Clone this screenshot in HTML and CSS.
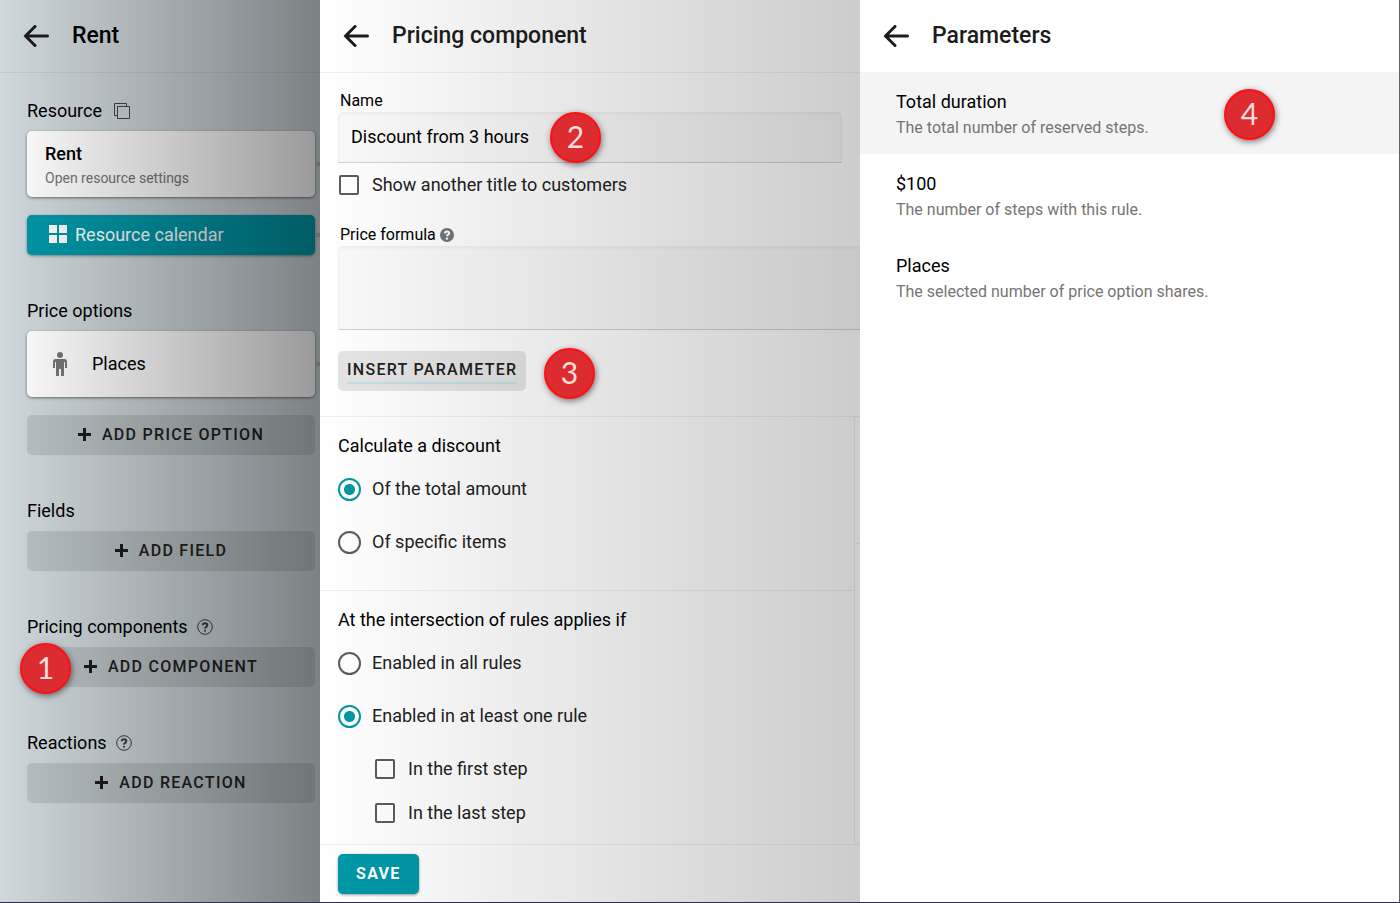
FILE: index.html
```html
<!DOCTYPE html>
<html lang="en">
<head>
  <meta charset="UTF-8" />
  <meta name="viewport" content="width=device-width, initial-scale=1.0"/>
  <title>Pricing component</title>
  <link rel="stylesheet" href="styles.css">
</head>

<body>

  <!-- Resource panel -->
  <section class="panel resource-panel shaded">
    <header>
      <button class="back" aria-label="Back">
        <svg width="26" height="22" viewBox="0 0 26 22"><path d="M12 1.500L2.500 11L12 20.500M2.500 11H24.500" /></svg>
      </button>
      <h1>Rent</h1>
    </header>

    <div class="sections">
      <div class="section">
        <h2>Resource
          <svg class="copy" width="18" height="18" viewBox="0 0 18 18"><path d="M4.500 13.500H1.500V1.500H13.500V4.500M4.500 4.500H16.500V16.500H4.500Z" /></svg>
        </h2>
        <a class="card" href="#resource">
          <span class="card-title">Rent</span>
          <span class="card-note">Open resource settings</span>
        </a>
        <button class="calendar-btn">
          <svg width="18" height="18" viewBox="0 0 18 18"><path d="M0 0H8V8H0ZM10 0H18V8H10ZM0 10H8V18H0ZM10 10H18V18H10Z" /></svg>
          Resource calendar
        </button>
      </div>

      <div class="section">
        <h2>Price options</h2>
        <a class="card place-card" href="#places">
          <svg width="14" height="24" viewBox="0 0 14 24"><circle cx="7" cy="3" r="3" /><path d="M2.500 7H11.500Q14 7 14 9.500V16H12V10H11V24H8V17H6V24H3V10H2V16H0V9.500Q0 7 2.500 7Z" /></svg>
          <span>Places</span>
        </a>
        <button class="add-btn"><svg class="plus" width="13" height="13" viewBox="0 0 13 13"><path d="M6.500 0V13M0 6.500H13" /></svg>ADD PRICE OPTION</button>
      </div>

      <div class="section">
        <h2>Fields</h2>
        <button class="add-btn"><svg class="plus" width="13" height="13" viewBox="0 0 13 13"><path d="M6.500 0V13M0 6.500H13" /></svg>ADD FIELD</button>
      </div>

      <div class="section">
        <h2>Pricing components
          <svg class="help" width="16" height="16" viewBox="0 0 16 16"><circle cx="8" cy="8" r="7.300" /><path class="hook" d="M5.700 6.300Q5.800 4.300 8 4.300T10.300 6.200Q10.300 7.200 9.200 7.800T8 9.600" /><circle class="dot" cx="8" cy="11.700" r="1" /></svg>
        </h2>
        <button class="add-btn"><svg class="plus" width="13" height="13" viewBox="0 0 13 13"><path d="M6.500 0V13M0 6.500H13" /></svg>ADD COMPONENT</button>
        <span class="badge badge-1">1</span>
      </div>

      <div class="section">
        <h2>Reactions
          <svg class="help" width="16" height="16" viewBox="0 0 16 16"><circle cx="8" cy="8" r="7.300" /><path class="hook" d="M5.700 6.300Q5.800 4.300 8 4.300T10.300 6.200Q10.300 7.200 9.200 7.800T8 9.600" /><circle class="dot" cx="8" cy="11.700" r="1" /></svg>
        </h2>
        <button class="add-btn"><svg class="plus" width="13" height="13" viewBox="0 0 13 13"><path d="M6.500 0V13M0 6.500H13" /></svg>ADD REACTION</button>
      </div>
    </div>
  </section>

  <!-- Pricing component form -->
  <form class="panel form-panel shaded">
    <header>
      <button type="button" class="back" aria-label="Back">
        <svg width="26" height="22" viewBox="0 0 26 22"><path d="M12 1.500L2.500 11L12 20.500M2.500 11H24.500" /></svg>
      </button>
      <h1>Pricing component</h1>
    </header>

    <div class="fields">
      <label class="field-label" for="name">Name</label>
      <div class="name-row">
        <input type="text" id="name" value="Discount from 3 hours">
        <span class="badge badge-2">2</span>
      </div>
      <label class="choice"><input type="checkbox">Show another title to customers</label>
      <label class="field-label formula-label" for="formula">Price formula
        <svg width="14" height="14" viewBox="0 0 14 14"><circle cx="7" cy="7" r="7" /><path class="hook" d="M4.800 5.400Q5 3.500 7 3.500T9.200 5.200Q9.200 6.200 8.100 6.700T7 8.300" /><circle class="dot" cx="7" cy="10.600" r="1.200" /></svg>
      </label>
      <textarea id="formula"></textarea>
      <div class="insert-row">
        <button type="button" class="insert-btn"><span>INSERT PARAMETER</span></button>
        <span class="badge badge-3">3</span>
      </div>
    </div>

    <div class="rules">
      <div class="groups">
        <fieldset>
          <legend>Calculate a discount</legend>
          <label class="choice"><input type="radio" name="base" checked>Of the total amount</label>
          <label class="choice"><input type="radio" name="base">Of specific items</label>
        </fieldset>
        <fieldset>
          <legend>At the intersection of rules applies if</legend>
          <label class="choice"><input type="radio" name="rule">Enabled in all rules</label>
          <label class="choice"><input type="radio" name="rule" checked>Enabled in at least one rule</label>
          <div class="steps">
            <label class="choice"><input type="checkbox">In the first step</label>
            <label class="choice"><input type="checkbox">In the last step</label>
          </div>
        </fieldset>
      </div>
      <div class="side"><div class="side-block"></div></div>
    </div>

    <footer>
      <button type="button" class="save-btn">SAVE</button>
    </footer>
  </form>

  <!-- Parameters list -->
  <section class="panel params-panel">
    <header>
      <button class="back" aria-label="Back">
        <svg width="26" height="22" viewBox="0 0 26 22"><path d="M12 1.500L2.500 11L12 20.500M2.500 11H24.500" /></svg>
      </button>
      <h1>Parameters</h1>
    </header>
    <ul>
      <li class="active">
        <h3>Total duration</h3>
        <p>The total number of reserved steps.</p>
        <span class="badge badge-4">4</span>
      </li>
      <li>
        <h3>$100</h3>
        <p>The number of steps with this rule.</p>
      </li>
      <li>
        <h3>Places</h3>
        <p>The selected number of price option shares.</p>
      </li>
    </ul>
  </section>

</body>
</html>
```
FILE: styles.css
```css
* {
  box-sizing: border-box;
}

body {
  margin: 0;
  min-height: 100vh;
  display: grid;
  grid-template-columns: 320px 540px 1fr;
  font-family: Roboto, sans-serif;
  font-size: 18px;
  line-height: 24px;
  color: #000;
  border-right: 1px solid #616366;
  border-bottom: 1px solid #2d3047;
}

h1, h2, h3, p, ul {
  margin: 0;
  padding: 0;
}

button, input, textarea {
  font-family: inherit;
}

button {
  cursor: pointer;
  border: none;
}

/* Panels */
.panel {
  position: relative;
  display: flex;
  flex-direction: column;
  overflow: hidden;
  background: #fff;
}

.resource-panel {
  background: #cfd8dc;
}

.shaded::after {
  content: "";
  position: absolute;
  inset: 0;
  pointer-events: none;
  background: linear-gradient(to right, rgba(0, 0, 0, 0), rgba(0, 0, 0, 0.2));
}

.resource-panel::after {
  background: linear-gradient(to right, rgba(0, 0, 0, 0), rgba(0, 0, 0, 0.4));
}

header {
  height: 73px;
  padding: 0 23px;
  display: flex;
  align-items: center;
  gap: 23px;
  border-bottom: 1px solid rgba(0, 0, 0, 0.06);
}

header h1 {
  font-size: 23px;
  font-weight: 500;
  line-height: 28px;
  color: #1c1c1c;
}

.resource-panel h1 {
  color: #000;
}

.back {
  background: none;
  padding: 0;
  width: 26px;
  height: 22px;
}

.back svg {
  display: block;
  fill: none;
  stroke: #1c1c1c;
  stroke-width: 3;
  stroke-linecap: round;
}

/* Resource panel */
.sections {
  padding: 26px 5px 26px 27px;
  display: flex;
  flex-direction: column;
  gap: 44px;
}

.section {
  position: relative;
}

.section h2 {
  display: flex;
  align-items: center;
  font-size: 18px;
  font-weight: 400;
  margin-bottom: 8px;
}

.copy {
  margin-left: 11px;
  fill: none;
  stroke: #444;
}

.help {
  margin-left: 9px;
  fill: none;
  stroke: #3c3f41;
}

.help .hook {
  stroke-width: 2;
}

.help .dot {
  fill: #3c3f41;
  stroke: none;
}

.card {
  position: relative;
  display: flex;
  flex-direction: column;
  justify-content: center;
  height: 66px;
  padding: 4px 18px 0;
  margin-bottom: 18px;
  background: #fff;
  border-radius: 5px;
  box-shadow: 0 1px 3px rgba(0, 0, 0, 0.5);
  color: #000;
  text-decoration: none;
}

/* connector to the next panel */
.card::after, .calendar-btn::after {
  content: "";
  position: absolute;
  left: 100%;
  top: 50%;
  width: 5px;
  height: 4px;
  margin-top: -2px;
  background: #b0b4b8;
}

.card-title {
  font-weight: 500;
}

.card-note {
  font-size: 14px;
  color: #757575;
}

.place-card {
  flex-direction: row;
  justify-content: flex-start;
  align-items: center;
  padding: 0 26px;
  gap: 25px;
}

.place-card svg {
  fill: #757575;
}

.calendar-btn {
  position: relative;
  display: flex;
  align-items: center;
  gap: 8px;
  width: 100%;
  height: 40px;
  padding: 0 22px 2px;
  border-radius: 5px;
  background: #0097a7;
  color: #fff;
  font-size: 18px;
  box-shadow: 0 1px 3px rgba(0, 0, 0, 0.4);
}

.calendar-btn svg {
  fill: #fff;
}

.add-btn {
  display: flex;
  align-items: center;
  justify-content: center;
  gap: 11px;
  width: 100%;
  height: 40px;
  padding: 0 0 2px;
  border-radius: 5px;
  background: rgba(0, 0, 0, 0.1);
  color: #212121;
  font-size: 16px;
  font-weight: 500;
  letter-spacing: 0.08em;
}

.plus {
  stroke: #1c1c1c;
  stroke-width: 3;
}

/* Form */
.fields {
  padding: 18px 18px 25px;
  display: flex;
  flex-direction: column;
  border-bottom: 1px solid rgba(0, 0, 0, 0.06);
}

.field-label {
  display: flex;
  align-items: center;
  gap: 4px;
  font-size: 16px;
  line-height: 20px;
  padding-left: 2px;
  margin-bottom: 1px;
}

.field-label svg {
  fill: #6f777c;
}

.field-label .hook {
  fill: none;
  stroke: #fff;
  stroke-width: 2;
}

.field-label .dot {
  fill: #fff;
}

.name-row, .insert-row {
  position: relative;
}

.name-row input, textarea {
  display: block;
  width: 100%;
  height: 51px;
  padding: 0 12px 2px;
  border: 1px solid rgba(0, 0, 0, 0.04);
  border-bottom-color: rgba(0, 0, 0, 0.16);
  border-radius: 5px 5px 0 0;
  background: rgba(0, 0, 0, 0.02);
  box-shadow: inset 0 2px 3px rgba(0, 0, 0, 0.04);
  font-size: 18px;
  color: #000;
}

.fields .choice {
  margin: 10px 0 28px;
}

textarea {
  width: 540px;
  height: 84px;
  padding: 12px;
  resize: none;
}

.insert-btn {
  display: block;
  height: 40px;
  margin-top: 21px;
  padding: 0 9px;
  border-radius: 5px;
  background: rgba(0, 0, 0, 0.1);
  color: #212121;
  font-size: 16px;
  font-weight: 500;
  letter-spacing: 0.08em;
}

.insert-btn span {
  display: block;
  line-height: 24px;
  border-bottom: 2px solid rgba(0, 188, 212, 0.15);
}

.choice {
  display: flex;
  align-items: center;
  height: 24px;
  color: #212121;
}

.choice input {
  appearance: none;
  flex: none;
  width: 20px;
  height: 20px;
  margin: 0 13px 0 1px;
  border: 2px solid #5c5c5c;
  border-radius: 2px;
}

.choice input[type="radio"] {
  width: 23px;
  height: 23px;
  margin: 0 11px 0 0;
  border-radius: 50%;
}

.choice input[type="radio"]:checked {
  border-color: #0097a7;
  background: radial-gradient(circle, #0097a7 5px, transparent 6px);
}

.rules {
  flex: 1;
  display: flex;
}

.groups {
  flex: 1;
  border-right: 1px solid rgba(0, 0, 0, 0.06);
}

.side {
  width: 5px;
}

.side-block {
  height: 127px;
  border-bottom: 1px solid rgba(0, 0, 0, 0.06);
}

fieldset {
  display: flex;
  flex-direction: column;
  gap: 29px;
  margin: 0;
  padding: 0 18px 36px;
  border: none;
  border-bottom: 1px solid rgba(0, 0, 0, 0.06);
}

fieldset:last-child {
  padding-bottom: 18px;
  border-bottom: none;
}

legend {
  padding: 17px 0 19px;
}

.steps {
  display: flex;
  flex-direction: column;
  gap: 20px;
  padding-left: 36px;
}

footer {
  padding: 9px 18px 8px;
  border-top: 1px solid rgba(0, 0, 0, 0.06);
}

.save-btn {
  display: block;
  height: 40px;
  padding: 0 18px 2px;
  border-radius: 5px;
  background: #0097a7;
  color: #fff;
  font-size: 16px;
  font-weight: 700;
  letter-spacing: 0.08em;
  box-shadow: 0 1px 3px rgba(0, 0, 0, 0.4);
}

/* Parameters */
.params-panel header {
  height: 72px;
  border: none;
}

.params-panel ul {
  list-style: none;
}

.params-panel li {
  position: relative;
  padding: 18px 36px 14px;
}

.params-panel li.active {
  background: #f4f4f4;
}

.params-panel h3 {
  font-size: 18px;
  font-weight: 400;
}

.params-panel p {
  margin-top: 2px;
  font-size: 16px;
  color: #757575;
}

/* Step badges */
.badge {
  position: absolute;
  z-index: 2;
  width: 51px;
  height: 51px;
  border: 2px solid #ff1014;
  border-radius: 50%;
  background: #dc2c2f;
  box-shadow: 1px 2px 6px rgba(0, 0, 0, 0.5);
  color: #fbdcdd;
  font-family: Lato, sans-serif;
  font-size: 30px;
  line-height: 44px;
  text-align: center;
}

.badge-1 {
  left: -7px;
  bottom: -7px;
}

.badge-2 {
  left: 212px;
  top: 0;
}

.badge-3 {
  left: 206px;
  bottom: -8px;
}

.badge-4 {
  right: 124px;
  top: 17px;
}
```
